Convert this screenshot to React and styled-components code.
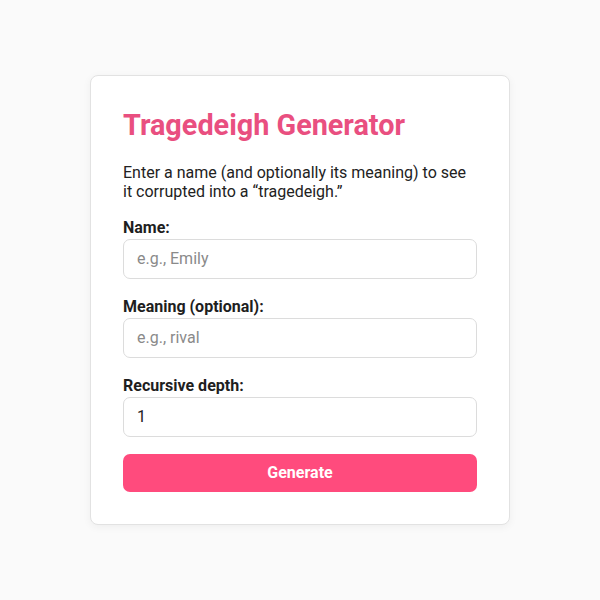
import React from "react";
import styled, { createGlobalStyle } from "styled-components";

const Global = createGlobalStyle`
  html, body { margin: 0; padding: 0; }
  body {
    background: #fafafa;
    font-family: Roboto, "Liberation Sans", Arial, sans-serif;
    color: #222;
  }
  * { box-sizing: border-box; }
`;

const Page = styled.div`
  min-height: 100vh;
  display: flex;
  align-items: center;
  justify-content: center;
`;

const Card = styled.div`
  width: 420px;
  background: #fff;
  border: 1px solid #e2e2e2;
  border-radius: 8px;
  box-shadow: 0 2px 8px rgba(0, 0, 0, 0.05);
  padding: 32px;
`;

const Title = styled.h1`
  margin: 0 0 22px;
  font-size: 28.8px;
  font-weight: 700;
  line-height: 34px;
  color: #e94f80;
`;

const Intro = styled.p`
  margin: 0 0 17px;
  font-size: 16px;
  line-height: 1.15;
  color: #222;
`;

const Field = styled.div`
  display: flex;
  flex-direction: column;
  gap: 2px;
  margin-bottom: ${(p) => (p.$last ? "17px" : "18px")};
`;

const Label = styled.label`
  font-size: 16px;
  font-weight: 700;
  line-height: 19px;
  color: #1e1e1e;
`;

const Input = styled.input`
  width: 100%;
  height: 40px;
  padding: 0 13px;
  font-family: inherit;
  font-size: 16px;
  color: #222;
  background: #fff;
  border: 1px solid #dcdcdc;
  border-radius: 7px;
  outline: none;
  &::placeholder { color: #8a8a8a; }
`;

const Button = styled.button`
  width: 100%;
  height: 38px;
  border: none;
  border-radius: 7px;
  background: #ff4b7d;
  color: #fff;
  font-family: inherit;
  font-size: 16px;
  font-weight: 700;
  cursor: pointer;
`;

export default function App() {
  return (
    <>
      <Global />
      <Page>
        <Card>
          <Title>Tragedeigh Generator</Title>
          <Intro>
            Enter a name (and optionally its meaning) to see it corrupted into a
            “tragedeigh.”
          </Intro>
          <Field>
            <Label htmlFor="name">Name:</Label>
            <Input id="name" placeholder="e.g., Emily" />
          </Field>
          <Field>
            <Label htmlFor="meaning">Meaning (optional):</Label>
            <Input id="meaning" placeholder="e.g., rival" />
          </Field>
          <Field $last>
            <Label htmlFor="depth">Recursive depth:</Label>
            <Input id="depth" defaultValue="1" />
          </Field>
          <Button>Generate</Button>
        </Card>
      </Page>
    </>
  );
}
